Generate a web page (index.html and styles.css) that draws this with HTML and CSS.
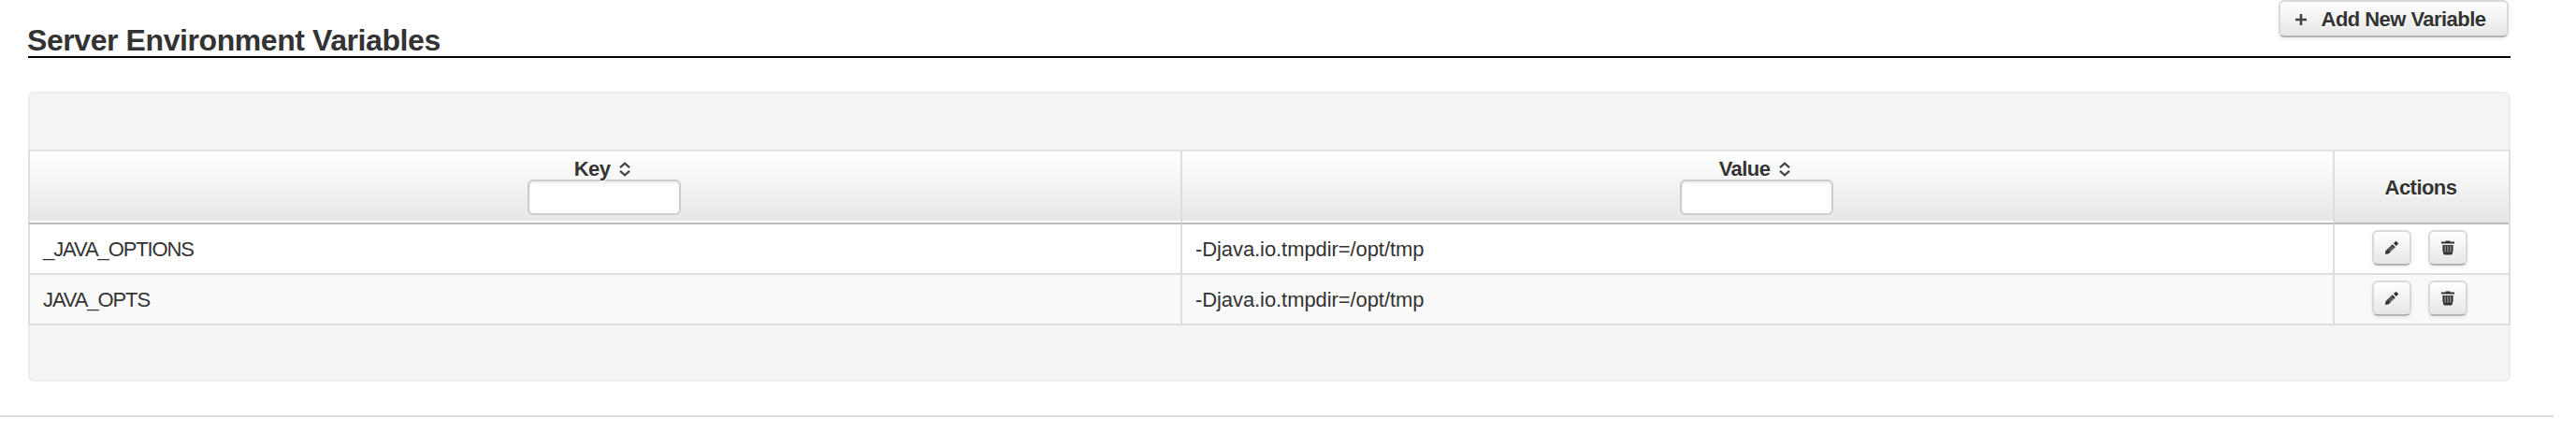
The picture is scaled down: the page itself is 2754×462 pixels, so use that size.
FILE: index.html
```html
<!DOCTYPE html>
<html lang="en">
<head>
    <meta charset="UTF-8">
    <meta name="viewport" content="width=device-width, initial-scale=1.0">
    <title>Server Environment Variables</title>
    <link rel="stylesheet" href="styles.css">
</head>
<body>
    <svg class="sprite" width="0" height="0">
        <symbol id="sort" viewBox="0 0 12 16">
            <path d="M1 6.2 L6 1.7 L11 6.2 M1 9.8 L6 14.3 L11 9.8" fill="none" stroke="#444" stroke-width="2.3"/>
        </symbol>
        <symbol id="pencil" viewBox="0 0 16 16">
            <path d="M1 15 L1.5 11.2 L8.8 4.2 L11.9 7.3 L4.8 14.3 Z" fill="#333"/>
            <path d="M4.6 10.8 L9 6.6 M6 12 L10.2 7.8" fill="none" stroke="#aaa" stroke-width=".9"/>
            <path d="M10 3.3 L12.6 .7 L15.3 3.4 L12.7 6 Z" fill="#333"/>
        </symbol>
        <symbol id="trash" viewBox="0 0 14 16">
            <path d="M4.6 .5 H9.4 V1.6 H14 V3.6 H0 V1.6 H4.6 Z" fill="#333"/>
            <path d="M1.4 5 H12.6 V12 H12 V14.2 L10.6 15.6 H3.4 L2 14.2 V12 H1.4 Z" fill="#333"/>
            <path d="M4.1 5.8 V12.8 M7 5.8 V12.8 M9.9 5.8 V12.8" stroke="#aaa" stroke-width="1.1"/>
        </symbol>
    </svg>
    <div class="container">
        <div class="heading">
            <h1>Server Environment Variables</h1>
            <button class="btn btn-add">
                <svg width="12" height="12" viewBox="0 0 12 12"><path d="M6 0 V12 M0 6 H12" stroke="#444" stroke-width="2.6"/></svg>
                <span>Add New Variable</span>
            </button>
        </div>
        <div class="panel">
            <table>
                <colgroup>
                    <col>
                    <col>
                    <col class="col-actions">
                </colgroup>
                <thead>
                    <tr>
                        <th>
                            <div class="label"><span>Key</span><svg width="12" height="16"><use href="#sort"/></svg></div>
                            <input type="text">
                        </th>
                        <th>
                            <div class="label"><span>Value</span><svg width="12" height="16"><use href="#sort"/></svg></div>
                            <input type="text">
                        </th>
                        <th class="plain">Actions</th>
                    </tr>
                </thead>
                <tbody>
                    <tr>
                        <td class="key">_JAVA_OPTIONS</td>
                        <td>-Djava.io.tmpdir=/opt/tmp</td>
                        <td>
                            <div class="actions">
                                <button class="btn btn-icon"><svg width="16" height="16"><use href="#pencil"/></svg></button>
                                <button class="btn btn-icon"><svg width="14" height="16"><use href="#trash"/></svg></button>
                            </div>
                        </td>
                    </tr>
                    <tr>
                        <td class="key">JAVA_OPTS</td>
                        <td>-Djava.io.tmpdir=/opt/tmp</td>
                        <td>
                            <div class="actions">
                                <button class="btn btn-icon"><svg width="16" height="16"><use href="#pencil"/></svg></button>
                                <button class="btn btn-icon"><svg width="14" height="16"><use href="#trash"/></svg></button>
                            </div>
                        </td>
                    </tr>
                </tbody>
            </table>
        </div>
    </div>
    <hr>
</body>
</html>
```

FILE: styles.css
```css
* {
    box-sizing: border-box;
}

body {
    margin: 0;
    background: #fff;
    color: #333;
    font-family: "Liberation Sans", Arial, sans-serif;
    font-size: 22px;
}

svg {
    display: block;
}

.sprite {
    position: absolute;
}

.container {
    margin: 0 70px 0 30px;
}

.heading {
    display: flex;
    justify-content: space-between;
    align-items: flex-start;
    height: 62px;
    padding-right: 2px;
    border-bottom: 2px solid #000;
}

h1 {
    margin: 24px 0 0 -1px;
    font-size: 32px;
    line-height: 38px;
    letter-spacing: -0.42px;
    white-space: nowrap;
}

.btn {
    display: flex;
    align-items: center;
    justify-content: center;
    padding: 0;
    border: 2px solid #d9d9d9;
    border-bottom-color: #b3b3b3;
    border-radius: 6px;
    background: linear-gradient(#fff, #e6e6e6);
    background-clip: padding-box;
    box-shadow: 0 2px 4px rgba(0, 0, 0, 0.07);
    color: #333;
    font-family: inherit;
}

.btn-add {
    width: 246px;
    height: 40px;
    gap: 16px;
    padding: 2px 7px 0 0;
    font-size: 22px;
    font-weight: bold;
    letter-spacing: -0.55px;
    text-shadow: 0 2px 2px #fff;
}

.btn-icon {
    width: 42px;
    height: 38px;
}

.panel {
    margin-top: 36px;
    height: 310px;
    padding: 60px 0;
    border: 2px solid #ededed;
    border-radius: 6px;
    background: #f4f4f4;
}

table {
    width: 2654px;
    margin: 0 -2px;
    table-layout: fixed;
    border-collapse: separate;
    border-spacing: 0;
    border-right: 2px solid #ddd;
}

.col-actions {
    width: 188px;
}

th {
    height: 80px;
    padding: 0 2px 0 0;
    border: solid #ddd;
    border-width: 2px 0 2px 2px;
    border-top-color: #e3e3e3;
    border-bottom-color: #bbb;
    background: linear-gradient(#fff, #e6e6e6);
    background-clip: padding-box;
    box-shadow: inset 0 -2px 0 #fff;
    letter-spacing: -0.55px;
    vertical-align: top;
    text-shadow: 0 2px 2px #fff;
}

th.plain {
    padding-top: 2px;
    box-shadow: none;
    vertical-align: middle;
}

.label {
    display: flex;
    justify-content: center;
    align-items: center;
    gap: 10px;
    height: 30px;
    padding: 7px 4px 0 0;
}

input {
    display: block;
    width: 164px;
    height: 38px;
    margin: 0 auto;
    border: 2px solid #ccc;
    border-radius: 6px;
    background: #fff;
    box-shadow: inset 0 2px 2px rgba(0, 0, 0, 0.075);
}

td {
    height: 54px;
    padding: 2px 14px 0;
    border-left: 2px solid #ddd;
    border-bottom: 2px solid #ddd;
    background: #fff;
    letter-spacing: -0.08px;
    white-space: nowrap;
}

td.key {
    letter-spacing: -1.1px;
}

tr:nth-child(even) td {
    background: #f9f9f9;
}

.actions {
    display: flex;
    justify-content: center;
    gap: 18px;
    margin: -4px 4px 0 0;
}

hr {
    width: 2730px;
    height: 2px;
    margin: 36px 0 0;
    border: 0;
    background: #ddd;
}
```
